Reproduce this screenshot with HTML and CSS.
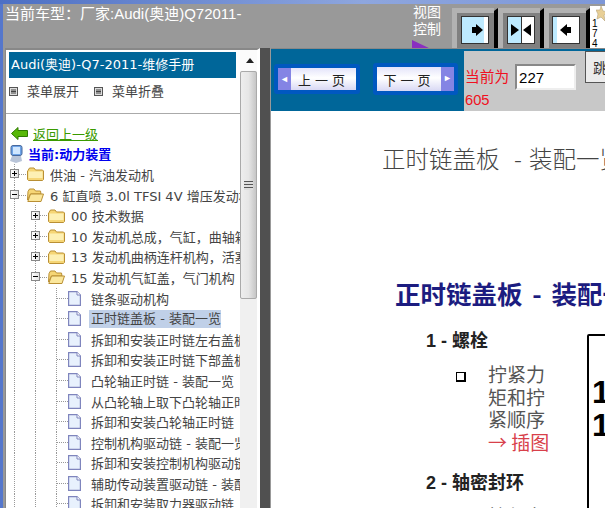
FILE: index.html
```html
<!DOCTYPE html>
<html lang="zh-CN">
<head>
    <meta charset="UTF-8">
    <title>维修手册</title>
    <link rel="stylesheet" href="styles.css">
</head>
<body>

<svg class="defs" width="0" height="0">
    <symbol id="folder" viewBox="0 0 17 14">
        <path d="M1 3.500 2.500 1H7L8.500 3H15.500L16.500 4V12.500L15.500 13.500H1.500L.5 12.500V4Z" fill="#f6d676" stroke="#b98f34"/>
        <path d="M1.500 4.500H15.500V11H1.500Z" fill="#fdf0b4"/>
    </symbol>
    <symbol id="folder-open" viewBox="0 0 17 14">
        <path d="M1 3.500 2.500 1H7L8.500 3H13.500L14 6H3.500L.5 12Z" fill="#f6d676" stroke="#b98f34"/>
        <path d="M3.500 6H16.500L14 13.500H.8Z" fill="#fbe79c" stroke="#b98f34"/>
    </symbol>
    <symbol id="doc" viewBox="0 0 13 15">
        <path d="M.6.6H9L12.400 4V14.400H.6Z" fill="#e8f1fd" stroke="#7f85bd" stroke-width="1.200"/>
        <path d="M9 .6V4H12.400" fill="#fff" stroke="#7f85bd"/>
    </symbol>
    <symbol id="menu-icon" viewBox="0 0 9 9">
        <rect x=".5" y=".5" width="8" height="8" fill="#ddd" stroke="#555"/>
        <path d="M2 3H7M2 4.500H7M2 6H7" stroke="#444"/>
    </symbol>
</svg>

<div class="strip"></div>

<div class="window">
    <!-- Header -->
    <div class="header">
        <div class="car-title">当前车型：厂家:Audi(奥迪)Q72011-</div>
        <div class="view-label">
            视图<br>控制
            <svg class="view-mark" width="19" height="9" viewBox="0 0 19 9"><path d="M0 0 19 9H0Z" fill="#8a2fc0"/></svg>
        </div>
        <div class="view-buttons">
            <div class="view-btn">
                <svg width="46" height="40" viewBox="0 0 46 40">
                    <path d="M0 0H42V40H0Z" fill="#b2b2b2"/><rect x="5" y="5" width="37" height="35" fill="#808080"/>
                    <path d="M42 3 46 0V40H42Z" fill="#000"/>
                    <rect x="9.500" y="8.500" width="27" height="27" fill="#bdeaff" stroke="#333"/>
                    <rect x="32" y="9" width="4" height="26" fill="#fff"/>
                    <path d="M24 16V19H20V25H24V28L31 22Z" fill="#000"/>
                </svg>
            </div>
            <div class="view-btn">
                <svg width="46" height="40" viewBox="0 0 46 40">
                    <path d="M0 0H42V40H0Z" fill="#b2b2b2"/><rect x="5" y="5" width="37" height="35" fill="#808080"/>
                    <path d="M42 3 46 0V40H42Z" fill="#000"/>
                    <rect x="9.500" y="8.500" width="27" height="27" fill="#fff" stroke="#333"/>
                    <rect x="10" y="9" width="13" height="26" fill="#bdeaff"/><path d="M23.500 9V35" stroke="#333"/>
                    <path d="M13 16V28L21 22ZM33 16V28L25 22Z" fill="#000"/>
                </svg>
            </div>
            <div class="view-btn">
                <svg width="46" height="40" viewBox="0 0 46 40">
                    <path d="M0 0H42V40H0Z" fill="#b2b2b2"/><rect x="5" y="5" width="37" height="35" fill="#808080"/>
                    <path d="M42 3 46 0V40H42Z" fill="#000"/>
                    <rect x="8.500" y="8.500" width="27" height="27" fill="#fff" stroke="#333"/>
                    <rect x="9" y="9" width="4" height="26" fill="#bdeaff"/>
                    <path d="M23 16V19H27V25H23V28L16 22Z" fill="#000"/>
                </svg>
            </div>
            <div class="side-note">
                <svg class="star" width="12" height="15" viewBox="0 0 12 15"><path d="M5 0 7 5 12 6 8 9 9 15 5 11 1 13 2 8 0 4 4 4Z" fill="#e8cf96" stroke="#b5a27a" stroke-width=".6"/></svg>
                1<br>7<br>4
            </div>
        </div>
    </div>

    <div class="main">
        <!-- Left menu -->
        <div class="left-panel">
            <div class="manual-title">Audi(奥迪)-Q7-2011-维修手册</div>
            <div class="menu-row">
                <span class="menu-link"><svg width="9" height="9"><use href="#menu-icon"/></svg>菜单展开</span>
                <span class="menu-link"><svg width="9" height="9"><use href="#menu-icon"/></svg>菜单折叠</span>
            </div>
            <div class="tree">
                <div class="row back-row">
                    <svg width="17" height="13" viewBox="0 0 17 13"><path d="M7 .5V3.500H16.500V9.500H7V12.500L.5 6.500Z" fill="#58b808" stroke="#2e7a00"/></svg>
                    <a class="back-link">返回上一级</a>
                </div>
                <div class="row current-row">
                    <svg width="14" height="18" viewBox="0 0 14 18">
                        <rect x="2" y=".5" width="11" height="10" rx="2" fill="#6ea4e8" stroke="#47689c"/>
                        <rect x="4" y="2" width="7" height="7" fill="#cfe6ff"/>
                        <path d="M3 11H12L13 16 7 18 1 16Z" fill="#b8c4d8"/>
                    </svg>
                    <b>当前:动力装置</b>
                </div>
                <div class="row root"><i class="toggle plus"></i><svg class="ico" width="17" height="14"><use href="#folder"/></svg><span>供油 - 汽油发动机</span></div>
                <div class="row root"><i class="toggle minus"></i><svg class="ico" width="17" height="14"><use href="#folder-open"/></svg><span>6 缸直喷 3.0l TFSI 4V 增压发动机</span></div>
                <div class="row"><i class="slot"></i><i class="toggle plus"></i><svg class="ico" width="17" height="14"><use href="#folder"/></svg><span>00 技术数据</span></div>
                <div class="row"><i class="slot"></i><i class="toggle plus"></i><svg class="ico" width="17" height="14"><use href="#folder"/></svg><span>10 发动机总成，气缸，曲轴箱</span></div>
                <div class="row"><i class="slot"></i><i class="toggle plus"></i><svg class="ico" width="17" height="14"><use href="#folder"/></svg><span>13 发动机曲柄连杆机构，活塞</span></div>
                <div class="row"><i class="slot"></i><i class="toggle minus"></i><svg class="ico" width="17" height="14"><use href="#folder-open"/></svg><span>15 发动机气缸盖，气门机构</span></div>
                <div class="row leaf"><i class="slot"></i><i class="slot"></i><i class="elbow"></i><svg width="13" height="15"><use href="#doc"/></svg><span>链条驱动机构</span></div>
                <div class="row leaf"><i class="slot"></i><i class="slot"></i><i class="elbow"></i><svg width="13" height="15"><use href="#doc"/></svg><span class="selected">正时链盖板 - 装配一览</span></div>
                <div class="row leaf"><i class="slot"></i><i class="slot"></i><i class="elbow"></i><svg width="13" height="15"><use href="#doc"/></svg><span>拆卸和安装正时链左右盖板</span></div>
                <div class="row leaf"><i class="slot"></i><i class="slot"></i><i class="elbow"></i><svg width="13" height="15"><use href="#doc"/></svg><span>拆卸和安装正时链下部盖板</span></div>
                <div class="row leaf"><i class="slot"></i><i class="slot"></i><i class="elbow"></i><svg width="13" height="15"><use href="#doc"/></svg><span>凸轮轴正时链 - 装配一览</span></div>
                <div class="row leaf"><i class="slot"></i><i class="slot"></i><i class="elbow"></i><svg width="13" height="15"><use href="#doc"/></svg><span>从凸轮轴上取下凸轮轴正时链</span></div>
                <div class="row leaf"><i class="slot"></i><i class="slot"></i><i class="elbow"></i><svg width="13" height="15"><use href="#doc"/></svg><span>拆卸和安装凸轮轴正时链</span></div>
                <div class="row leaf"><i class="slot"></i><i class="slot"></i><i class="elbow"></i><svg width="13" height="15"><use href="#doc"/></svg><span>控制机构驱动链 - 装配一览</span></div>
                <div class="row leaf"><i class="slot"></i><i class="slot"></i><i class="elbow"></i><svg width="13" height="15"><use href="#doc"/></svg><span>拆卸和安装控制机构驱动链</span></div>
                <div class="row leaf"><i class="slot"></i><i class="slot"></i><i class="elbow"></i><svg width="13" height="15"><use href="#doc"/></svg><span>辅助传动装置驱动链 - 装配一览</span></div>
                <div class="row leaf"><i class="slot"></i><i class="slot"></i><i class="elbow"></i><svg width="13" height="15"><use href="#doc"/></svg><span>拆卸和安装取力器驱动链</span></div>
            </div>
        </div>

        <!-- Scrollbar and splitter -->
        <div class="scrollbar">
            <div class="scroll-up"></div>
            <div class="scroll-thumb"><div class="scroll-grip"></div></div>
        </div>
        <div class="splitter"></div>

        <!-- Right page -->
        <div class="right-panel">
            <div class="toolbar">
                <div class="pager">
                    <div class="page-btn prev"><i class="cap">◄</i><span>上一页</span></div>
                    <div class="page-btn next"><span>下一页</span><i class="cap">►</i></div>
                </div>
                <div class="jump">
                    <div class="jump-info">
                        <div class="jump-line">当前为<input class="page-input" type="text" value="227"></div>
                        <div>605</div>
                    </div>
                    <button class="jump-btn" type="button">跳转</button>
                </div>
            </div>
            <div class="sheet">
                <div class="sheet-title">正时链盖板&nbsp; - 装配一览</div>
                <div class="sheet-heading">正时链盖板 - 装配一览</div>
                <div class="sheet-body">
                    <div class="parts">
                        <div class="part-name">1 - 螺栓</div>
                        <div class="part-note">
                            <i class="bullet"></i>
                            <div>拧紧力<br>矩和拧<br>紧顺序<br><span class="see-fig">→ 插图</span></div>
                        </div>
                        <div class="part-name">2 - 轴密封环</div>
                        <div class="part-note"><i class="bullet"></i><div>拧紧力</div></div>
                    </div>
                    <div class="figure-box">1<br>1</div>
                </div>
            </div>
        </div>
    </div>
</div>

</body>
</html>
```

FILE: styles.css
```css
html, body {
    margin: 0;
    height: 508px;
    overflow: hidden;
}
body {
    font-family: "DejaVu Sans", "Noto Sans CJK SC", sans-serif;
    font-size: 13px;
    background-color: #999;
    color: #333;
}
.defs {
    display: block;
    height: 0;
}
.strip {
    height: 4px;
    background: linear-gradient(to right, #4c6fc4, #8ea6de 60%, #7d97d8);
}
.window {
    height: 504px;
    border-left: 3px solid #5577cc;
    display: flex;
    flex-direction: column;
}

/* Header */
.header {
    height: 44px;
    display: flex;
    flex-shrink: 0;
    color: #fff;
    overflow: hidden;
}
.car-title {
    width: 407px;
    padding: 1px 0 0 2px;
    font-family: "Liberation Sans", "Noto Sans CJK SC", sans-serif;
    font-size: 15px;
    line-height: 18px;
}
.view-label {
    width: 39px;
    padding: 0 0 0 1px;
    margin-top: -1px;
    font-family: "Noto Sans CJK SC", sans-serif;
    font-size: 14px;
    line-height: 17px;
    position: relative;
}
.view-mark {
    position: absolute;
    left: 0;
    top: 37px;
}
.view-buttons {
    display: flex;
    margin-top: 4px;
}
.view-btn {
    width: 46px;
    height: 40px;
}
.side-note {
    width: 15px;
    height: 42px;
    margin-top: -2px;
    box-sizing: border-box;
    padding: 13px 0 0 2px;
    background-color: #fff;
    color: #000;
    font-family: "Liberation Sans", sans-serif;
    font-size: 10px;
    line-height: 10px;
    position: relative;
}
.star {
    position: absolute;
    left: 6px;
    top: 0;
}

.main {
    flex: 1;
    display: flex;
    min-height: 0;
}

/* Left menu */
.left-panel {
    width: 234px;
    margin-left: 2px;
    background-color: #fff;
    border-left: 1px solid #888;
    border-top: 2px solid #888;
    overflow: hidden;
}
.manual-title {
    margin: 2px 4px 0 3px;
    height: 26px;
    line-height: 26px;
    padding-left: 2px;
    background-color: #006699;
    color: #fff;
    white-space: nowrap;
}
.menu-row {
    height: 29px;
    padding: 6px 0 0 3px;
    display: flex;
    gap: 15px;
    border-bottom: 1px solid #aaa;
    color: #444;
}
.menu-link {
    display: flex;
    align-items: flex-start;
    gap: 9px;
    line-height: 15px;
}
.menu-link svg {
    margin-top: 3px;
}

/* Tree */
.tree {
    padding-top: 9px;
    white-space: nowrap;
}
.row {
    height: 20.6px;
    display: flex;
    align-items: center;
    padding-left: 4px;
    color: #444;
}
.row svg,
.row span {
    flex-shrink: 0;
}
.row .ico {
    margin-right: 6px;
}
.slot {
    width: 21px;
    height: 100%;
    flex-shrink: 0;
    background: repeating-linear-gradient(#999 0 1px, transparent 1px 2px) 4px 0 / 1px 100% no-repeat;
}
.toggle {
    width: 17px;
    height: 100%;
    flex-shrink: 0;
    background:
        repeating-linear-gradient(to right, #999 0 1px, transparent 1px 2px) 9px 50% / 8px 1px no-repeat,
        repeating-linear-gradient(#999 0 1px, transparent 1px 2px) 4px 0 / 1px 100% no-repeat;
    position: relative;
}
.toggle::before {
    content: "";
    position: absolute;
    left: 0;
    top: 5.300px;
    width: 7px;
    height: 7px;
    border: 1px solid #888;
    background: linear-gradient(to right, #fff, #e4e4e4) no-repeat;
}
.toggle::after {
    content: "";
    position: absolute;
    left: 2px;
    top: 9.300px;
    width: 5px;
    height: 1px;
    background-color: #000;
}
.toggle.plus::after {
    background:
        linear-gradient(#000, #000) 50% 50% / 5px 1px no-repeat,
        linear-gradient(#000, #000) 50% 50% / 1px 5px no-repeat;
    height: 5px;
    top: 7.300px;
}
.elbow {
    width: 16px;
    height: 100%;
    flex-shrink: 0;
    background:
        repeating-linear-gradient(to right, #999 0 1px, transparent 1px 2px) 5px 50% / 11px 1px no-repeat,
        repeating-linear-gradient(#999 0 1px, transparent 1px 2px) 4px 0 / 1px 100% no-repeat;
}
.leaf span {
    margin-left: 10px;
}
.leaf span.selected {
    background-color: #c0d0e8;
    padding: 0 2px;
    margin-left: 8px;
    width: 128px;
    line-height: 18px;
}
.back-row {
    padding-left: 5px;
    gap: 5px;
}
.back-link {
    color: #3a9a00;
    text-decoration: underline;
}
.current-row {
    padding-left: 3px;
    gap: 5px;
    color: #0000ee;
}

/* Scrollbar */
.scrollbar {
    width: 17px;
    background-color: #f0f0f0;
    border-top: 2px solid #888;
    border-right: 3px solid #fff;
    flex-shrink: 0;
}
.scroll-up {
    height: 21px;
    background-color: #fbfbfb;
    position: relative;
}
.scroll-up::after {
    content: "";
    position: absolute;
    left: 6px;
    top: 8px;
    border: 4px solid transparent;
    border-top: 0;
    border-bottom: 5px solid #222;
}
.scroll-thumb {
    height: 228px;
    box-sizing: border-box;
    background: linear-gradient(to right, #eee, #e6e6e6 50%, #c6c6c6);
    border: 1px solid #aaa;
    border-radius: 2px;
    display: flex;
    align-items: center;
    justify-content: center;
}
.scroll-grip {
    width: 9px;
    height: 9px;
    background: repeating-linear-gradient(#555 0 1px, #ddd 1px 3px);
}
.splitter {
    width: 10px;
    background-color: #505050;
    border-right: 1px solid #999;
    flex-shrink: 0;
}

/* Right page */
.right-panel {
    flex: 1;
    min-width: 0;
    overflow: hidden;
    background-color: #fff;
    border-top: 1px solid #888;
}
.toolbar {
    height: 62px;
    display: flex;
    background-color: #006699;
}
.pager {
    width: 193px;
    flex-shrink: 0;
    display: flex;
    gap: 13px;
    padding: 15px 0 0 3px;
    box-sizing: border-box;
}
.page-btn {
    height: 22px;
    border: 4px solid #0058c0;
    border-radius: 3px;
    background: linear-gradient(#e4e4fa, #fff 45%, #d8d8f4);
    display: flex;
    align-items: center;
    color: #222;
    font-size: 13px;
    font-family: "Noto Sans CJK SC", sans-serif;
}
.page-btn span {
    flex: 1;
    text-align: center;
    letter-spacing: 4px;
}
.page-btn.prev {
    width: 78px;
}
.page-btn.next {
    width: 77px;
    margin-top: -1px;
    height: 24px;
}
.cap {
    width: 13px;
    height: 100%;
    background-color: #8484e4;
    color: #fff;
    font-style: normal;
    font-size: 9px;
    line-height: 22px;
    text-align: center;
}
.jump {
    flex: 1;
    display: flex;
    background-color: #c8c8c8;
    margin-top: 2px;
    padding-left: 1px;
    color: #f01020;
    font-family: "Liberation Sans", "Noto Sans CJK SC", sans-serif;
    font-size: 14.700px;
}
.jump-info {
    padding-top: 13px;
    width: 120px;
    flex-shrink: 0;
    line-height: 20px;
}
.jump-line {
    display: flex;
    align-items: center;
    gap: 6px;
}
.page-input {
    width: 61px;
    height: 26px;
    box-sizing: border-box;
    border: 2px solid;
    border-color: #888 #eee #eee #888;
    padding: 0 2px;
    font-family: "Liberation Sans", sans-serif;
    font-size: 15px;
    color: #000;
}
.jump-btn {
    width: 60px;
    height: 32px;
    flex-shrink: 0;
    border: 1px solid #555;
    background-color: #ececec;
    color: #333;
    font-family: "Noto Sans CJK SC", sans-serif;
    font-size: 14px;
    text-align: left;
    padding: 0 0 0 7px;
}
.sheet {
    font-family: "Noto Sans CJK SC", sans-serif;
}
.sheet-title {
    margin: 33px 0 0 111px;
    font-size: 23.500px;
    word-spacing: 2px;
    line-height: 28px;
    font-weight: 300;
    color: #444;
    white-space: nowrap;
}
.sheet-heading {
    margin: 105px 0 0 124px;
    font-size: 25.500px;
    word-spacing: 4px;
    line-height: 32px;
    font-weight: 700;
    color: #1c1c80;
    white-space: nowrap;
}
.sheet-body {
    display: flex;
    margin-top: 18px;
}
.parts {
    width: 316px;
    flex-shrink: 0;
    padding-left: 155px;
    box-sizing: border-box;
}
.part-name {
    font-family: "Liberation Sans", "Noto Sans CJK SC", sans-serif;
    font-size: 18px;
    line-height: 28px;
    font-weight: 700;
    color: #222;
}
.part-note {
    display: flex;
    margin: 8px 0 16px 30px;
    font-size: 19px;
    line-height: 22.500px;
    color: #555;
    white-space: nowrap;
}
.bullet {
    width: 7px;
    height: 7px;
    margin: 9px 22px 0 0;
    border: 1px solid #000;
    border-width: 1px 2px 2px 1px;
}
.see-fig {
    color: #d8404a;
}
.figure-box {
    flex: 1;
    height: 200px;
    margin-top: 7px;
    border: 2px solid #000;
    border-radius: 2px;
    padding: 40px 0 0 3px;
    font-family: "Liberation Sans", sans-serif;
    font-size: 32px;
    line-height: 33px;
    font-weight: 700;
    color: #000;
}
```
